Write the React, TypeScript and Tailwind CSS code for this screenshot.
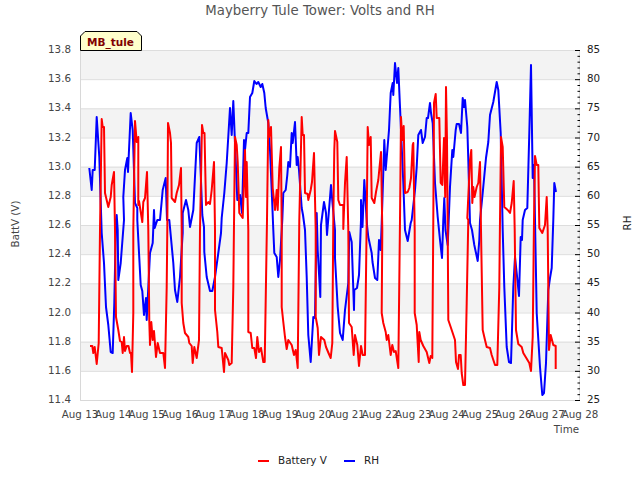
const red = "90,346 92.3,346 93.3,353 94.7,347 96.7,364 98.7,343 100,230 101.7,119 102.7,127 104,127 105,193 108.3,207 110.7,197 111.7,185 114,172 115,230 116,317 118.3,330 120,341 121.7,342 122.7,353 124,337 125,351 126.7,346 128.5,346 130,353 131,353 132,372 133.3,313 133.3,230 135,121 136,133 136.7,142 138.3,137 138.3,205 139,201 142.3,222 143.3,202 145,198 147,172 148.3,230 149.3,322 150,345 151.3,322 152.7,340 154,331 156,357 157.7,343 160,353 163.3,353 165,368 166.7,287 167.3,230 168,123 170,133 171,143 171.7,198 175,202 176.7,193 179,185 181,168 181.7,230 181.7,303 183.3,323 185,333 188.3,337 189.3,343 191.7,346 192.7,363 194.3,347 196.7,358 199,340 200,230 202,125 203.3,133 204.5,133 206,205 208.3,202 210,204 211.7,190 214,162 215,230 215,310 217.3,332 218.3,347 221.7,348 224,372 225,353 228.3,360 229.3,365 231.7,363 233.3,287 235,137 236.7,145 237.7,162 239.3,213 242.7,218 245,150 246,197 246.7,162 248.3,230 248.3,332 250.7,333 252.3,348 254.3,348 256,358 257.3,337 259,352 261,348 263.3,362 264.7,362 267,220 268.3,120 269,137 271,127 272.7,188 275,210 276.7,190 277.7,210 279.3,168 281,147 281.7,230 281.7,307 283.3,322 285,337 286.7,349 288.3,340 291.7,345 294,355 295.7,350 297.7,368 299.3,220 301.7,117 302.7,135 304,135 305,193 307.7,194 308.3,200 310.7,190 312,182 314,153 315.7,230 315.7,317 317.7,328 319,355 321,337 324.3,340 326,347 328.5,353 330.7,358 332.3,343 333.3,220 334.3,150 335,131 337.3,142 338.3,200 340,205 343.3,205 343.3,229 345,183 346.7,157 348.3,230 349,323 351.7,327 353.7,355 355,335 357.3,345 359,366 361,346 362.7,355 365,355 366.7,220 367.7,127 369,145 370.7,137 371.7,198 374.3,203 376,192 378.3,180 381,152 382.3,230 381.7,313 383.3,323 385.7,332 386.7,340 388.3,335 390.7,355 392.3,345 394,352 395.7,351 398.3,368 400,220 401,117 402.3,140 403.7,126 405,193 407.7,192 409.3,188 411,178 412.7,145 413.3,143 414.7,230 414.7,313 416.7,325 418.7,362 419.3,332 420.7,340 423.3,346 426.7,352 429.3,363 430.7,356 432.3,358 433.3,220 434,103 435.7,94 436.7,118 439.3,118 440.7,183 442.3,185 444,138 445.2,197 446,87 447,140 447.7,230 448.3,320 450.7,327 452.7,333 455,340 456,362 458,369 459,355 460.7,355 461.7,373 463.3,385 465,385 466.7,303 468.3,220 467.3,218 470,160 471.3,150 472.3,203 473.3,187 474.5,197 476.7,187 478.3,183 480,162 481,230 482.7,330 485,340 486.7,347 490,348 491.7,355 495,365 497.3,365 499.3,287 500,220 501,137 502.7,147 504.3,207 507.7,210 510,213 511.7,203 513.7,181 514.7,230 516,330 518.3,344 521.7,347 523.3,353 525.7,357 529.3,363 531,371 532.7,337 534,220 535,156 536.7,165 538.3,165 539.3,228 542.3,233 545,225 546.7,197 547.7,230 548.3,287 549,350 550.7,335 553.3,345 555.7,346 555.7,369";

const blue = "89.3,168 91.7,190 92.7,170 94.7,170 96.7,117 99.3,157 101.7,233 104,263 106,307 108.3,325 110.7,352 112.7,353 114.3,303 116,220 116.7,215 117.7,230 118.3,280 120.7,263 124,220 123.3,197 125,170 127.3,158 128,172 130.7,113 132.7,130 135,203 137.3,208 137.3,220 140.7,285 142.3,291 144,315 146,298 146.7,320 150,253 152.7,243 154,210 154.7,228 157.3,220 160,220 162.7,190 165.7,178 167,220 169.3,220 173.3,263 175,290 177.3,302 180,277 182.7,233 182.7,213 186,200 188.3,210 190,227 193.3,210 196.7,143 199.3,137 202.3,215 204,227 204.3,252 206.7,277 210,291 212.3,291 215,277 218.3,253 221,233 221.7,218 224.3,193 226.7,163 230,108 231.7,135 233.3,101 235,143 237.3,200 240,195 242,213 244,140 245,150 246.7,133 248.3,133 250,97 252.3,93 254.3,81 256.5,84 258.3,82 260.7,87 262.3,84 264.3,93 265.7,108 268.3,123 270,150 271.7,190 273.3,230 274.3,253 276.7,257 278.3,277 280,260 282.3,220 283.3,193 285.7,190 287.3,175 288.3,162 290,167 291.7,133 292.7,143 295,122 296.7,165 297.7,157 299,170 301.7,208 303,215 305,230 306.7,277 308.3,335 310.7,362 313.3,317 315,318 316.7,213 317.7,250 320.3,297 321,225 324,202 326,213 327,235 329,210 331,185 332.5,203 335,230 335,258 337.7,307 340,333 342.7,340 345,310 348.3,283 349.3,232 351.7,242 354,310 354.3,290 357,288 359,275 361,220 361,200 362.5,227 364.3,180 365.5,200 367,225 368.3,237 371.7,253 372.5,262 375,278 377.3,280 379,240 380.7,250 381.7,223 384.3,140 385.7,170 389,130 390.7,93 392.7,83 393.3,95 395,63 397,83 398.3,68 400,107 403.3,183 405,230 407.7,241 410.7,223 411.7,220 415,190 416.7,167 418.3,135 421,130 422.7,143 425,137 426.7,118 428,118 430,103 431,113 432.7,123 435,183 437.7,217 440,240 442,258 443.3,220 444.3,198 445.5,230 447.7,245 450,187 452.3,150 453.3,157 455.7,130 456.7,124 459,124 461,133 462.7,98 464,107 465,100 467.3,127 468.3,160 470,223 472,230 474.3,245 477.7,261 479.3,240 480,220 482.7,193 486,158 488.3,142 490,115 493.3,102 496.7,82 498.3,90 500.7,133 502.7,230 504.3,287 506.7,347 509,362 511,363 513.3,287 515,257 516.7,273 519,296 520.7,237 522,240 522.7,220 525,210 527.3,208 529.3,133 531,65 532.7,178 534,165 536.7,313 540,367 542.3,395 544,393 546,363 548.3,290 550,278 551.7,268 553.3,220 554.3,183 556,192";

const bands = [50, 108.33, 166.67, 225, 283.33, 341.67];
const leftLabels = ["13.8", "13.6", "13.4", "13.2", "13.0", "12.8", "12.6", "12.4", "12.2", "12.0", "11.8", "11.6", "11.4"];
const rightLabels = ["85", "80", "75", "70", "65", "60", "55", "50", "45", "40", "35", "30", "25"];
const days = [13, 14, 15, 16, 17, 18, 19, 20, 21, 22, 23, 24, 25, 26, 27, 28];
const minor = Array.from({ length: 61 }, (_, i) => i);

export default function App() {
  return (
    <div className="flex h-[480px] w-[640px] flex-col bg-white font-['DejaVu_Sans',sans-serif]">
      <div className="h-[22px] pt-[3px] text-center text-[13.3px] leading-[16px] text-[#555555]">
        Mayberry Tule Tower: Volts and RH
      </div>
      <svg width="640" height="423" viewBox="0 22 640 423" className="block" fontFamily="'DejaVu Sans', sans-serif" fontSize="10.3">
        {bands.map((y) => (
          <rect key={y} x="80" y={y} width="500" height="29.17" fill="#f3f3f3" />
        ))}
        {leftLabels.map((_, i) => (
          <line key={i} x1="80" x2="580" y1={50.5 + (i * 350) / 12} y2={50.5 + (i * 350) / 12} stroke="#dddddd" strokeWidth="1" />
        ))}
        <path d="M80.5 50V400.5H579.5V50" fill="none" stroke="#d8d8d8" strokeWidth="1" />
        {minor.map((i) => (
          <line key={i} x1={i % 5 === 0 ? 575 : 577.5} x2="580" y1={50.5 + (i * 350) / 60} y2={50.5 + (i * 350) / 60} stroke="#000000" strokeWidth="1" />
        ))}
        <polyline points={blue} fill="none" stroke="#0000ff" strokeWidth="2" strokeLinejoin="round" />
        <polyline points={red} fill="none" stroke="#ff0000" strokeWidth="2" strokeLinejoin="round" />
        <path d="M80.5 50.5V36L85 31.5H137L141.5 36V50.5Z" fill="#ffffcc" stroke="#000000" strokeWidth="1" />
        <text x="87" y="46" fontSize="10.5" fontWeight="700" fill="#800000">MB_tule</text>
        {leftLabels.map((t, i) => (
          <text key={t} x="71" y={53 + (i * 350) / 12} textAnchor="end" fill="#444444">{t}</text>
        ))}
        {rightLabels.map((t, i) => (
          <text key={t} x="587" y={53 + (i * 350) / 12} fill="#222222">{t}</text>
        ))}
        {days.map((d, i) => (
          <text key={d} x={80 + (i * 500) / 15} y="418" textAnchor="middle" fill="#444444">Aug {d}</text>
        ))}
        <text x="579" y="433" textAnchor="end" fill="#444444">Time</text>
        <text transform="translate(19 224) rotate(-90)" textAnchor="middle" fill="#444444">BattV (V)</text>
        <text transform="translate(631 223) rotate(-90)" textAnchor="middle" fill="#222222">RH</text>
      </svg>
      <div className="flex h-[35px] items-start pl-[258px] pt-[9px] text-[10.4px] leading-[13px] text-[#222222]">
        <span className="mt-[6px] h-[2px] w-[11px] bg-[#ff0000]" />
        <span className="ml-[9px] w-[49px] whitespace-nowrap">Battery V</span>
        <span className="ml-[17px] mt-[6px] h-[2px] w-[11px] bg-[#0000ff]" />
        <span className="ml-[9px]">RH</span>
      </div>
    </div>
  );
}
